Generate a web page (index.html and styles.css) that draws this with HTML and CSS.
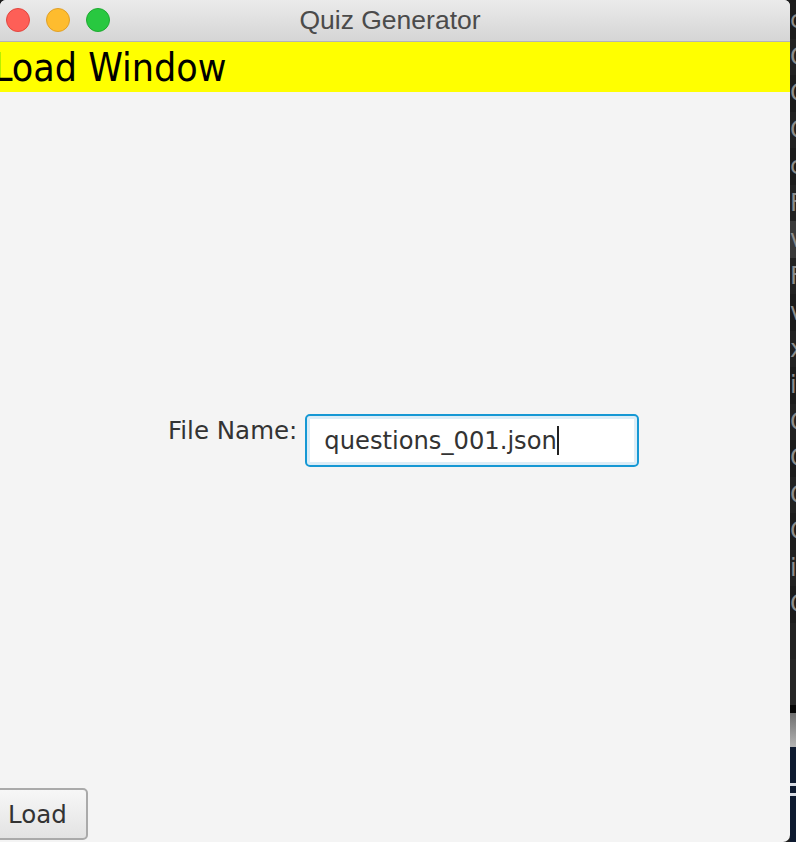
FILE: index.html
```html
<!DOCTYPE html>
<html lang="en">
<head>
<meta charset="utf-8">
<title>Quiz Generator</title>
<link rel="stylesheet" href="styles.css">
</head>
<body>
<div class="screen">
  <div class="window">
    <div class="titlebar">
      <div class="lights">
        <span class="light red"></span>
        <span class="light yellow"></span>
        <span class="light green"></span>
      </div>
      <div class="title">Quiz Generator</div>
      <div class="spacer"></div>
    </div>
    <div class="header"><h1 class="header-text">Load Window</h1></div>
    <main class="content">
      <div class="form-row">
        <label class="field-label">File Name:</label>
        <div class="field"><span class="field-value">questions_001.json</span><span class="caret"></span></div>
      </div>
    </main>
    <div class="actions"><button class="load-btn">Load</button></div>
  </div>
  <div class="terminal">
    <div class="term-lines">
      <div class="tl">c</div>
      <div class="tl alt">C</div>
      <div class="tl">C</div>
      <div class="tl alt">C</div>
      <div class="tl">c</div>
      <div class="tl alt">F</div>
      <div class="tl hl">v</div>
      <div class="tl alt">F</div>
      <div class="tl">v</div>
      <div class="tl alt">x</div>
      <div class="tl">i</div>
      <div class="tl alt">C</div>
      <div class="tl">C</div>
      <div class="tl alt">C</div>
      <div class="tl">C</div>
      <div class="tl alt">i</div>
      <div class="tl">C</div>
      <div class="tl alt"></div>
    </div>
    <div class="term-filler"></div>
    <div class="term-black"></div>
    <div class="term-gray"></div>
    <div class="term-navy">
      <div class="navy-line"></div>
      <div class="navy-line"></div>
    </div>
  </div>
</div>
</body>
</html>
```

FILE: styles.css
```css
* { box-sizing: border-box; }

html, body {
  margin: 0;
  padding: 0;
  width: 796px;
  height: 842px;
  overflow: hidden;
  background: #1e1e1e;
}

.screen {
  display: flex;
  width: 796px;
  height: 842px;
}

.window {
  width: 790px;
  height: 842px;
  display: flex;
  flex-direction: column;
  background: #f4f4f4;
  border-radius: 6px 6px 7px 0;
  overflow: hidden;
  font-family: "DejaVu Sans", "Lucida Grande", sans-serif;
  color: #333;
}

.titlebar {
  height: 42px;
  flex: none;
  display: grid;
  grid-template-columns: 1fr auto 1fr;
  align-items: center;
  background: linear-gradient(#ebebeb, #d5d5d5);
  border-bottom: 1px solid #b4b4b4;
}

.lights {
  display: flex;
  gap: 16px;
  padding-left: 6px;
  padding-bottom: 1px;
}

.light {
  width: 24px;
  height: 24px;
  border-radius: 50%;
}

.red { background: #fe5f57; border: 1px solid #e2463f; }
.yellow { background: #febc2e; border: 1px solid #e0a028; }
.green { background: #28c840; border: 1px solid #1eaa31; }

.title {
  font-family: "Liberation Sans", Arial, sans-serif;
  font-size: 26.5px;
  color: #4b4b4b;
  padding-right: 10px;
  padding-bottom: 1px;
}

.header {
  height: 50px;
  flex: none;
  background: #ffff00;
  display: flex;
  align-items: center;
}

.header-text {
  margin: 0 0 0 -7px;
  font-family: "DejaVu Sans Condensed", "DejaVu Sans", sans-serif;
  font-weight: normal;
  font-size: 39px;
  line-height: 1;
  color: #000;
}

.content {
  flex: 1;
  display: flex;
  align-items: center;
}

.form-row {
  display: flex;
  align-items: flex-start;
  gap: 8px;
  padding-left: 168px;
}

.field-label {
  font-size: 24.5px;
  line-height: 28px;
  padding-top: 3px;
  color: #333;
}

.field {
  width: 334px;
  height: 53px;
  display: flex;
  align-items: center;
  padding-left: 17px;
  background: #fff;
  border: 2px solid #1598d4;
  border-radius: 5px;
  box-shadow: inset 0 0 0 3px #dcedf7;
}

.field-value {
  font-size: 24.2px;
  line-height: 28px;
  color: #333;
  padding-top: 1px;
}

.caret {
  width: 2px;
  height: 29px;
  background: #222;
  margin-left: 0;
}

.actions {
  flex: none;
  height: 54px;
  display: flex;
  align-items: flex-start;
}

.load-btn {
  margin-left: -4px;
  width: 92px;
  height: 52px;
  padding: 0 0 0 10px;
  text-align: left;
  font-family: "DejaVu Sans", sans-serif;
  font-size: 24.5px;
  color: #333;
  background: linear-gradient(#f7f7f7, #e3e3e3);
  border: 2px solid #aaaaaa;
  border-radius: 5px;
}

.terminal {
  width: 6px;
  height: 842px;
  display: flex;
  flex-direction: column;
  background: #1b1b1b;
  overflow: hidden;
}

.term-lines {
  display: flex;
  flex-direction: column;
  padding-top: 2px;
}

.tl {
  height: 36.5px;
  font-family: "DejaVu Sans", sans-serif;
  font-size: 24px;
  line-height: 36px;
  color: #8c8c8c;
  background: #1c1c1c;
  white-space: nowrap;
  flex: none;
}

.tl.alt { background: #222222; }
.tl.hl { background: #3a3a3a; }

.term-filler {
  height: 46px;
  flex: none;
  background: #262626;
}

.term-black {
  height: 8px;
  background: #050505;
  flex: none;
}

.term-gray {
  height: 34px;
  background: linear-gradient(#6e6e6e, #b4b4b4);
  flex: none;
}

.term-navy {
  flex: 1;
  background: #0e1a30;
  display: flex;
  flex-direction: column;
  gap: 7px;
  padding-top: 36px;
}

.navy-line {
  height: 3px;
  background: #d8dce4;
}
```
